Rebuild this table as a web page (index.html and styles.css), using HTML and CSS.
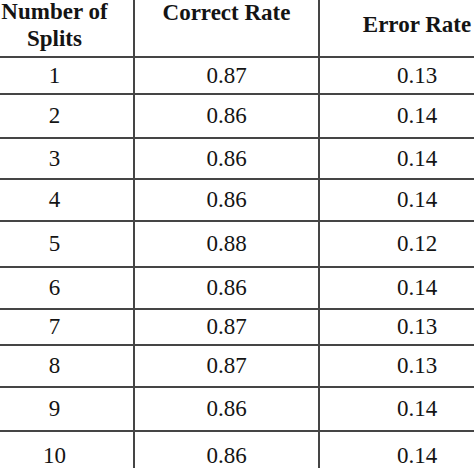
FILE: index.html
```html
<!DOCTYPE html>
<html>
<head>
<meta charset="utf-8">
<link rel="stylesheet" href="styles.css">
</head>
<body>
<div class="frame">
<table class="results">
  <colgroup>
    <col class="c-split">
    <col class="c-correct">
    <col class="c-error">
  </colgroup>
  <thead>
    <tr>
      <th>Number of<br>Splits</th>
      <th class="top">Correct Rate</th>
      <th>Error Rate</th>
    </tr>
  </thead>
  <tbody>
    <tr><td>1</td><td>0.87</td><td>0.13</td></tr>
    <tr><td>2</td><td>0.86</td><td>0.14</td></tr>
    <tr><td>3</td><td>0.86</td><td>0.14</td></tr>
    <tr><td>4</td><td>0.86</td><td>0.14</td></tr>
    <tr><td>5</td><td>0.88</td><td>0.12</td></tr>
    <tr><td>6</td><td>0.86</td><td>0.14</td></tr>
    <tr><td>7</td><td>0.87</td><td>0.13</td></tr>
    <tr><td>8</td><td>0.87</td><td>0.13</td></tr>
    <tr><td>9</td><td>0.86</td><td>0.14</td></tr>
    <tr><td>10</td><td>0.86</td><td>0.14</td></tr>
  </tbody>
</table>
</div>
</body>
</html>
```

FILE: styles.css
```css
html, body {
  margin: 0;
  padding: 0;
  background: #ffffff;
  overflow: hidden;
  width: 474px;
  height: 468px;
}

.frame {
  margin: -9px 0 0 -26px;
}

.results {
  border-collapse: collapse;
  table-layout: fixed;
  width: 540px;
  font-family: "Liberation Serif", "Times New Roman", serif;
  font-size: 23px;
  color: #141414;
}

.c-split { width: 159px; }
.c-correct { width: 185px; }
.c-error { width: 196px; }

.results th,
.results td {
  border: 2px solid #454545;
  text-align: center;
  vertical-align: middle;
  padding: 0;
  box-sizing: border-box;
}

.results th {
  font-weight: bold;
  line-height: 27px;
  height: 65px;
}

.results th.top {
  vertical-align: top;
  padding-top: 6px;
}

.results td {
  line-height: 26px;
}

.results tbody tr:nth-child(1) td { height: 37px; }
.results tbody tr:nth-child(2) td { height: 44px; }
.results tbody tr:nth-child(3) td { height: 41px; }
.results tbody tr:nth-child(4) td { height: 42px; }
.results tbody tr:nth-child(5) td { height: 46px; }
.results tbody tr:nth-child(6) td { height: 42px; }
.results tbody tr:nth-child(7) td { height: 36px; }
.results tbody tr:nth-child(8) td { height: 42px; }
.results tbody tr:nth-child(9) td { height: 44px; }
.results tbody tr:nth-child(10) td { height: 50px; }
```
